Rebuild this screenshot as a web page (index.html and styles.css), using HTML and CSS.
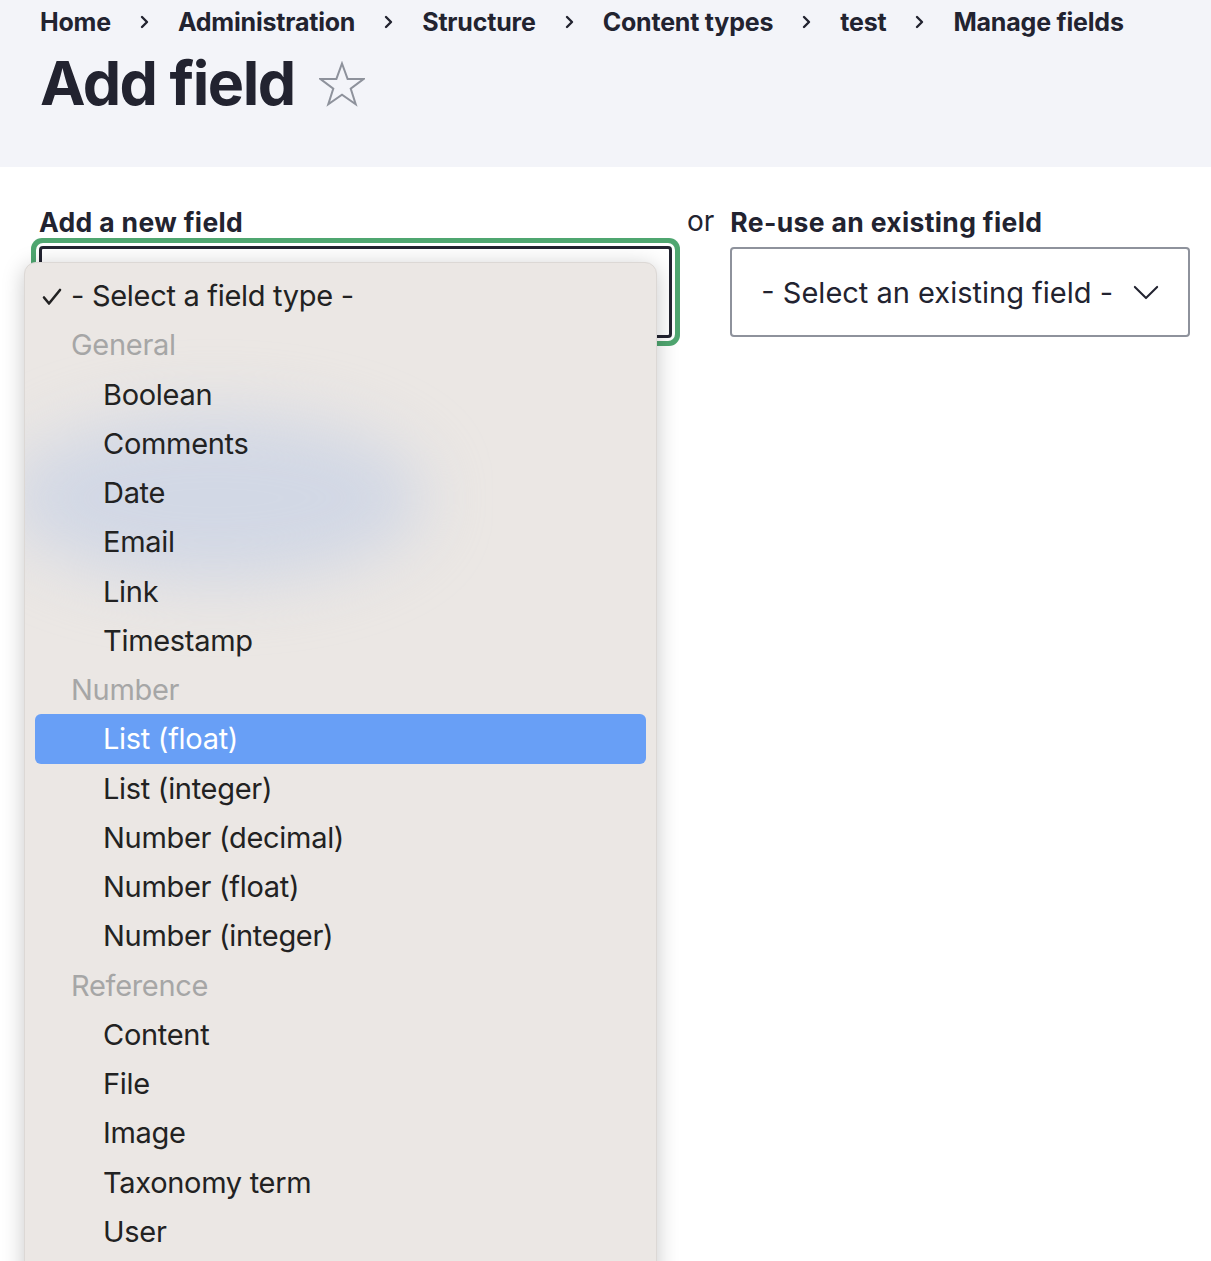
FILE: index.html
```html
<!DOCTYPE html>
<html lang="en">
<head>
<meta charset="utf-8">
<title>Add field</title>
<link rel="stylesheet" href="styles.css">
</head>
<body>
<header class="page-header">
  <nav class="breadcrumb">
    <a class="crumb">Home</a>
    <svg class="sep" viewBox="0 0 10 14" width="10" height="14"><path d="M2 2l5 5-5 5" fill="none" stroke="#222330" stroke-width="2.4" stroke-linecap="round" stroke-linejoin="round"/></svg>
    <a class="crumb">Administration</a>
    <svg class="sep" viewBox="0 0 10 14" width="10" height="14"><path d="M2 2l5 5-5 5" fill="none" stroke="#222330" stroke-width="2.4" stroke-linecap="round" stroke-linejoin="round"/></svg>
    <a class="crumb">Structure</a>
    <svg class="sep" viewBox="0 0 10 14" width="10" height="14"><path d="M2 2l5 5-5 5" fill="none" stroke="#222330" stroke-width="2.4" stroke-linecap="round" stroke-linejoin="round"/></svg>
    <a class="crumb">Content types</a>
    <svg class="sep" viewBox="0 0 10 14" width="10" height="14"><path d="M2 2l5 5-5 5" fill="none" stroke="#222330" stroke-width="2.4" stroke-linecap="round" stroke-linejoin="round"/></svg>
    <a class="crumb">test</a>
    <svg class="sep" viewBox="0 0 10 14" width="10" height="14"><path d="M2 2l5 5-5 5" fill="none" stroke="#222330" stroke-width="2.4" stroke-linecap="round" stroke-linejoin="round"/></svg>
    <a class="crumb">Manage fields</a>
  </nav>
  <div class="title-row">
    <h1 class="title">Add field</h1>
    <svg class="star" viewBox="0 0 46 46" width="46" height="46"><path d="M23 2.5l5.6 15.4h16.2l-13.1 9.7 5 15.6L23 33.6 9.3 43.2l5-15.6L1.2 17.9h16.2z" fill="none" stroke="#8e929c" stroke-width="2" stroke-linejoin="miter"/></svg>
  </div>
</header>

<main class="content">
  <div class="field-row">
    <div class="new-field">
      <label class="label">Add a new field</label>
      <div class="select-wrap">
        <div class="select focused"></div>
        <div class="menu">
          <div class="menu-glow"></div>
          <div class="opt selected"><svg class="check" viewBox="0 0 20 18" width="20" height="18"><path d="M2 9.5l5 6 11-13.5" fill="none" stroke="#222222" stroke-width="2.6" stroke-linecap="round" stroke-linejoin="round"/></svg>- Select a field type -</div>
          <div class="group">General</div>
          <div class="opt">Boolean</div>
          <div class="opt">Comments</div>
          <div class="opt">Date</div>
          <div class="opt">Email</div>
          <div class="opt">Link</div>
          <div class="opt">Timestamp</div>
          <div class="group">Number</div>
          <div class="opt active">List (float)</div>
          <div class="opt">List (integer)</div>
          <div class="opt">Number (decimal)</div>
          <div class="opt">Number (float)</div>
          <div class="opt">Number (integer)</div>
          <div class="group">Reference</div>
          <div class="opt">Content</div>
          <div class="opt">File</div>
          <div class="opt">Image</div>
          <div class="opt">Taxonomy term</div>
          <div class="opt">User</div>
        </div>
      </div>
    </div>
    <div class="or">or</div>
    <div class="existing-field">
      <label class="label">Re-use an existing field</label>
      <div class="select existing">
        <span>- Select an existing field -</span>
        <svg class="chev" viewBox="0 0 28 18" width="26" height="17"><path d="M2 3l12 12 12-12" fill="none" stroke="#222330" stroke-width="2.2" stroke-linecap="round" stroke-linejoin="round"/></svg>
      </div>
    </div>
  </div>
</main>
</body>
</html>
```

FILE: styles.css
```css
* { box-sizing: border-box; }
html, body { margin: 0; padding: 0; }
body {
  font-family: "Inter", "Liberation Sans", sans-serif;
  color: #222330;
  background: #ffffff;
  height: 1261px;
  overflow: hidden;
}
.page-header {
  background: #f3f4f9;
  height: 167px;
  padding: 5px 40px 0 40px;
}
.breadcrumb {
  display: flex;
  align-items: center;
  font-size: 25px;
  font-weight: 700;
  line-height: 34px;
  letter-spacing: -0.2px;
}
.crumb { color: #222330; }
.sep { margin: 0 28px 0 29px; }
.title-row {
  display: flex;
  align-items: center;
  margin-top: 7px;
}
.title {
  margin: 0;
  font-size: 61px;
  font-weight: 700;
  line-height: 74px;
  letter-spacing: -1.5px;
}
.star { margin-left: 24px; margin-top: 2px; }

.content { padding: 40px 21px 0 40px; }
.field-row { display: flex; align-items: flex-start; }
.label {
  display: block;
  font-size: 26.5px;
  font-weight: 700;
  line-height: 30px;
  letter-spacing: 0.35px;
  margin-bottom: 9px;
  white-space: nowrap;
}
.new-field { width: 633px; margin-left: -1px; }
.select-wrap { position: relative; }
.select {
  height: 92px;
  border-radius: 3px;
}
.select.focused {
  border: 3px solid #222330;
  box-shadow: 0 0 0 3px #ffffff, 0 0 0 8px #4fa670;
  border-radius: 4px;
}
.or {
  font-size: 28px;
  line-height: 28px;
  margin: 0 16px 0 15px;
}
.existing-field { flex: 1; }
.select.existing {
  margin-top: 10px;
  height: 90px;
  border: 2px solid #8e929c;
  border-radius: 4px;
  display: flex;
  align-items: center;
  justify-content: space-between;
  padding: 0 29px 0 29px;
  font-size: 29px;
}

.menu {
  position: absolute;
  top: 16px;
  left: -15px;
  width: 633px;
  height: 1040px;
  background: #ebe7e4;
  border-radius: 12px;
  border: 1px solid #dcd8d5;
  box-shadow: 0 4px 22px rgba(0, 0, 0, 0.22);
  padding: 8px 10px;
  overflow: hidden;
}
.menu-glow {
  position: absolute;
  left: -20px;
  top: 150px;
  width: 420px;
  height: 170px;
  border-radius: 50%;
  background: rgba(200, 210, 230, 0.7);
  filter: blur(32px);
}
.opt, .group {
  position: relative;
  height: 49.26px;
  line-height: 49px;
  font-size: 29px;
  letter-spacing: -0.3px;
  white-space: nowrap;
}
.opt { padding-left: 68px; color: #222222; }
.group { padding-left: 36px; color: #a6a6a6; }
.opt.selected { padding-left: 36px; }
.check {
  position: absolute;
  left: 7px;
  top: 17px;
}
.opt.active {
  background: #689ff6;
  color: #ffffff;
  border-radius: 6px;
}
```
